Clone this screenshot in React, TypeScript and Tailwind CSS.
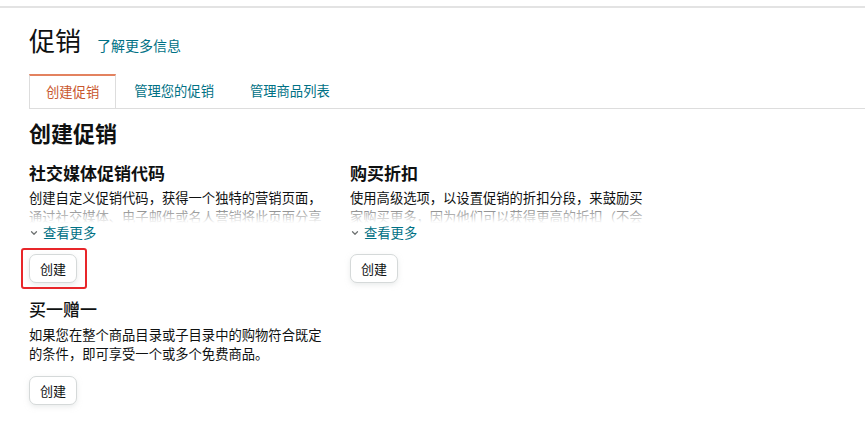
import { ChevronDown } from "lucide-react";

const FONT = { fontFamily: '"Noto Sans CJK SC", "Noto Sans", Arial, sans-serif' };

const TABS = ["创建促销", "管理您的促销", "管理商品列表"];

type Promo = {
  title: string;
  desc: string;
  collapsed?: boolean;
  bold?: boolean;
  marked?: boolean;
};

const PROMOS: Promo[] = [
  {
    title: "社交媒体促销代码",
    desc: "创建自定义促销代码，获得一个独特的营销页面，通过社交媒体、电子邮件或名人营销将此页面分享给买家。",
    collapsed: true,
    bold: true,
    marked: true,
  },
  {
    title: "购买折扣",
    desc: "使用高级选项，以设置促销的折扣分段，来鼓励买家购买更多，因为他们可以获得更高的折扣（不会叠加）。",
    collapsed: true,
    bold: true,
  },
  {
    title: "买一赠一",
    desc: "如果您在整个商品目录或子目录中的购物符合既定的条件，即可享受一个或多个免费商品。",
  },
];

function CreateButton({ marked }: { marked?: boolean }) {
  return (
    <div className="relative inline-block">
      <button className="h-[29px] px-[10px] rounded-[7px] border border-[#d5d9d9] bg-white text-[13px] text-[#0f1111] shadow-[0_2px_5px_rgba(213,217,217,0.5)]">
        创建
      </button>
      {marked && (
        <span className="absolute -left-[8px] -right-[10px] -top-[6px] -bottom-[6px] border-2 border-[#e8262a] rounded-[3px] pointer-events-none" />
      )}
    </div>
  );
}

function PromoCard({ promo }: { promo: Promo }) {
  return (
    <div className="flex flex-col items-start">
      <h3 className={`text-[17px] leading-[24px] text-[#0f1111] ${promo.bold ? "font-bold" : "font-medium"}`}>
        {promo.title}
      </h3>
      {promo.collapsed ? (
        <>
          <div className="relative mt-[3px] w-[300px] h-[35px] overflow-hidden text-[13.3px] leading-[19px] text-[#0f1111]">
            {promo.desc}
            <div className="absolute left-0 right-0 top-[17px] h-[18px] bg-gradient-to-b from-white/30 to-white" />
          </div>
          <a className="flex items-center gap-[4px] text-[13.3px] leading-[19px] text-[#007185]">
            <ChevronDown className="w-[10px] h-[10px] text-[#6f7373]" strokeWidth={3} />
            查看更多
          </a>
        </>
      ) : (
        <p className="mt-[4px] w-[300px] text-[13.3px] leading-[19px] text-[#0f1111]">{promo.desc}</p>
      )}
      <div className={promo.collapsed ? "mt-[12px]" : "mt-[13px]"}>
        <CreateButton marked={promo.marked} />
      </div>
    </div>
  );
}

export default function App() {
  return (
    <div className="w-[865px] h-[425px] bg-white overflow-hidden" style={FONT}>
      <div className="h-[6px]" />
      <div className="border-t-2 border-[#e3e3e3]" />

      <div className="pl-[29px]">
        {/* page title */}
        <div className="mt-[14px] flex items-baseline gap-[16px]">
          <h1 className="text-[26px] leading-[36px] text-[#0f1111]">促销</h1>
          <a className="text-[14px] text-[#007185]">了解更多信息</a>
        </div>

        {/* tabs */}
        <div className="mt-[16px] flex border-b border-[#dddddd]">
          {TABS.map((t, i) => (
            <div
              key={t}
              className={
                i === 0
                  ? "h-[34px] px-[16px] flex items-center text-[13.3px] text-[#c9572e] border-t-2 border-[#e3825f] border-x border-x-[#dddddd] -mb-px bg-white"
                  : "h-[34px] px-[18px] flex items-center text-[13.3px] text-[#007185]"
              }
            >
              {t}
            </div>
          ))}
        </div>

        <h2 className="mt-[8px] text-[22px] leading-[30px] font-bold text-[#0f1111]">创建促销</h2>

        <div className="mt-[14px] grid grid-cols-[321px_321px] gap-y-[14px]">
          {PROMOS.map((p) => (
            <PromoCard key={p.title} promo={p} />
          ))}
        </div>
      </div>
    </div>
  );
}
